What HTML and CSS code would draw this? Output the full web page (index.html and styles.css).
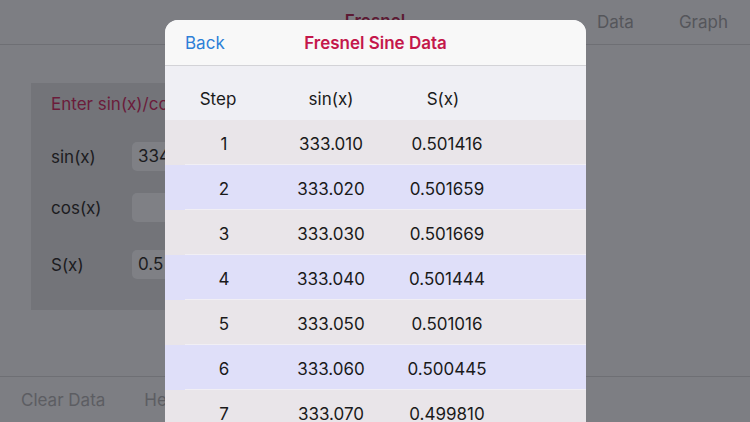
FILE: index.html
```html
<!DOCTYPE html>
<html lang="en">
<head>
    <meta charset="UTF-8">
    <meta name="viewport" content="width=device-width, initial-scale=1.0">
    <title>Fresnel</title>
    <link rel="stylesheet" href="styles.css">
</head>
<body>
    <div class="app">
        <div class="navbar">
            <div class="nav-title">Fresnel</div>
            <div class="nav-links">
                <span>Data</span>
                <span>Graph</span>
            </div>
        </div>
        <div class="main">
            <div class="panel">
                <div class="panel-title">Enter sin(x)/cos(x)</div>
                <div class="field field-sin">
                    <span class="field-label">sin(x)</span>
                    <div class="field-input">334</div>
                </div>
                <div class="field field-cos">
                    <span class="field-label">cos(x)</span>
                    <div class="field-input"></div>
                </div>
                <div class="field field-s">
                    <span class="field-label">S(x)</span>
                    <div class="field-input">0.5</div>
                </div>
            </div>
        </div>
        <div class="toolbar">
            <span>Clear Data</span>
            <span>Help</span>
        </div>
    </div>

    <!-- modal sheet -->
    <div class="sheet">
        <div class="sheet-header">
            <span class="back">Back</span>
            <span class="sheet-title">Fresnel Sine Data</span>
            <span></span>
        </div>
        <div class="col-head">
            <span>Step</span>
            <span>sin(x)</span>
            <span>S(x)</span>
        </div>
        <div class="row odd"><span>1</span><span>333.010</span><span>0.501416</span></div>
        <div class="row even"><span>2</span><span>333.020</span><span>0.501659</span></div>
        <div class="row odd"><span>3</span><span>333.030</span><span>0.501669</span></div>
        <div class="row even"><span>4</span><span>333.040</span><span>0.501444</span></div>
        <div class="row odd"><span>5</span><span>333.050</span><span>0.501016</span></div>
        <div class="row even"><span>6</span><span>333.060</span><span>0.500445</span></div>
        <div class="row odd"><span>7</span><span>333.070</span><span>0.499810</span></div>
    </div>
</body>
</html>
```
FILE: styles.css
```css
body {
    margin: 0;
    width: 750px;
    height: 422px;
    overflow: hidden;
    position: relative;
    background-color: #7d7e83;
    font-family: Inter, "Open Sans", sans-serif;
    font-size: 17px;
}
.app {
    display: flex;
    flex-direction: column;
    height: 422px;
}
.navbar {
    height: 44px;
    border-bottom: 1px solid #6e6f74;
    position: relative;
    display: flex;
    align-items: center;
    justify-content: flex-end;
}
.nav-title {
    position: absolute;
    left: 0;
    right: 0;
    top: 11px;
    text-align: center;
    font-weight: 600;
    color: #5c1a33;
}
.nav-links {
    display: flex;
    gap: 45px;
    padding-right: 22px;
    color: #55565b;
}
.main {
    flex: 1;
    padding: 38px 0 0 31px;
}
.panel {
    width: 500px;
    height: 227px;
    background-color: #737479;
    padding-left: 20px;
    box-sizing: border-box;
}
.panel-title {
    padding-top: 11px;
    color: #6b1c3b;
    line-height: 20px;
}
.field {
    display: flex;
    align-items: center;
    color: #1c1c1f;
}
.field-sin {
    margin-top: 28px;
}
.field-cos {
    margin-top: 22px;
}
.field-s {
    margin-top: 28px;
}
.field-label {
    width: 81px;
}
.field-input {
    width: 200px;
    height: 29px;
    line-height: 29px;
    border-radius: 5px;
    background-color: #7f8085;
    padding-left: 6px;
}
.toolbar {
    height: 45px;
    border-top: 1px solid #6e6f74;
    display: flex;
    align-items: center;
    gap: 39px;
    padding-left: 21px;
    color: #5c5d62;
}

/* data sheet */
.sheet {
    position: absolute;
    left: 165px;
    top: 20px;
    width: 421px;
    height: 420px;
    border-radius: 13px 13px 0 0;
    overflow: hidden;
    background-color: #efeff4;
}
.sheet-header {
    height: 45px;
    background-color: #f8f8f8;
    border-bottom: 1px solid #d3d3d7;
    display: grid;
    grid-template-columns: 1fr auto 1fr;
    align-items: center;
    padding: 0 20px;
}
.back {
    color: #2d7fd7;
}
.sheet-title {
    color: #c4174b;
    font-weight: 600;
}
.col-head {
    height: 54px;
    display: grid;
    grid-template-columns: 66px 160px 64px;
    padding: 12px 0 0 20px;
    box-sizing: border-box;
    align-items: center;
    text-align: center;
    color: #1a1a1a;
}
.row {
    height: 45px;
    display: grid;
    grid-template-columns: 78px 136px 96px;
    padding-left: 20px;
    align-items: center;
    text-align: center;
    color: #1a1a1a;
    position: relative;
}
.row span {
    padding-top: 2px;
}
.row::after {
    content: "";
    position: absolute;
    left: 20px;
    right: 0;
    bottom: 0;
    height: 1px;
    background-color: #f1eff4;
}
.row.odd {
    background-color: #e9e5e9;
}
.row.even {
    background-color: #dfdff9;
}
```
